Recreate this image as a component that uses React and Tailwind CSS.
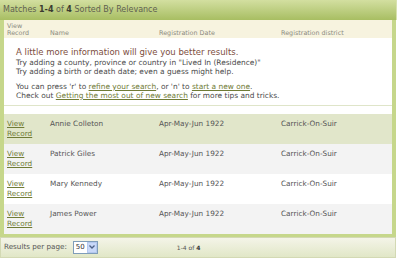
export default function App() {
  const rows = [
    { name: "Annie Colleton", bg: "bg-[#e1e6ca]" },
    { name: "Patrick Giles", bg: "bg-[#f3f3f3]" },
    { name: "Mary Kennedy", bg: "bg-white" },
    { name: "James Power", bg: "bg-[#f3f3f3]" },
  ];
  const link = "text-[#707b35] underline decoration-[#707b35]";
  return (
    <div className="w-[400px] h-[262px] bg-white font-['DejaVu_Sans',Verdana,sans-serif] text-[#555]">
      <div className="w-[397px]">
        <div className="h-[20px] bg-gradient-to-b from-[#d3dfa0] to-[#a8be62] text-[8px] text-[#5f5f50] pl-[3px] flex items-center border-r border-[#d8e2b0]">
          <span>
            Matches <b className="text-[#3a3a30]">1-4</b> of <b className="text-[#3a3a30]">4</b> Sorted By Relevance
          </span>
        </div>
        <div className="w-[396px] border-l-[4px] border-r-[4px] border-b-[3px] border-[#c6d78b]">
          <div className="h-[18px] bg-[#f7f3df] flex text-[6.4px] text-[#8a8a80] leading-[7px] pt-[3px]">
            <div className="w-[44px] pl-[3px]">View<br />Record</div>
            <div className="w-[111px] pt-[7px] pl-[2px]">Name</div>
            <div className="w-[122px] pt-[7px]">Registration Date</div>
            <div className="pt-[7px]">Registration district</div>
          </div>
          <div className="bg-white pl-[12px] pt-[9px] pb-[5px] border-b border-[#dfe5c9]">
            <div className="text-[8.5px] leading-[10.5px] text-[#7d4e3e]">
              A little more information will give you better results.
            </div>
            <div className="text-[7.45px] leading-[9px] text-[#4a4a4a]">
              <div>Try adding a county, province or country in "Lived In (Residence)"</div>
              <div>Try adding a birth or death date; even a guess might help.</div>
              <div className="mt-[6px]">
                You can press 'r' to <span className={link}>refine your search</span>, or 'n' to{" "}
                <span className={link}>start a new one</span>.
              </div>
              <div>
                Check out <span className={link}>Getting the most out of new search</span> for more tips and tricks.
              </div>
            </div>
          </div>
          <div className="h-[8px] bg-white" />
          {rows.map((r) => (
            <div key={r.name} className={`h-[30px] flex pt-[5px] text-[7.3px] leading-[10px] text-[#555] ${r.bg}`}>
              <div className="w-[44px] pl-[3px]">
                <span className={link}>View</span>
                <br />
                <span className={link}>Record</span>
              </div>
              <div className="w-[111px] pl-[2px]">{r.name}</div>
              <div className="w-[122px]">Apr-May-Jun 1922</div>
              <div>Carrick-On-Suir</div>
            </div>
          ))}
        </div>
        <div className="w-[396px] h-[21px] border border-[#d3d9b4] bg-gradient-to-b from-[#f4f4e8] to-[#e1e7c7] flex items-center text-[7.2px] text-[#555]">
          <span className="pl-[3px]">Results per page:</span>
          <div className="ml-[6px] w-[25px] h-[13px] border border-[#7f9db9] bg-white flex items-center">
            <span className="pl-[2px] flex-1 text-[7px] text-[#333]">50</span>
            <div className="w-[10px] h-[11px] bg-[#c8d8f8] border border-[#b4c8ee] flex items-center justify-center">
              <svg width="6" height="4" viewBox="0 0 6 4">
                <path d="M0.5 0.5 L3 3 L5.5 0.5" stroke="#4d6185" strokeWidth="1.3" fill="none" />
              </svg>
            </div>
          </div>
          <span className="ml-[79px] text-[6px] text-[#555]">
            1-4 of <b className="text-[#333]">4</b>
          </span>
        </div>
      </div>
    </div>
  );
}
